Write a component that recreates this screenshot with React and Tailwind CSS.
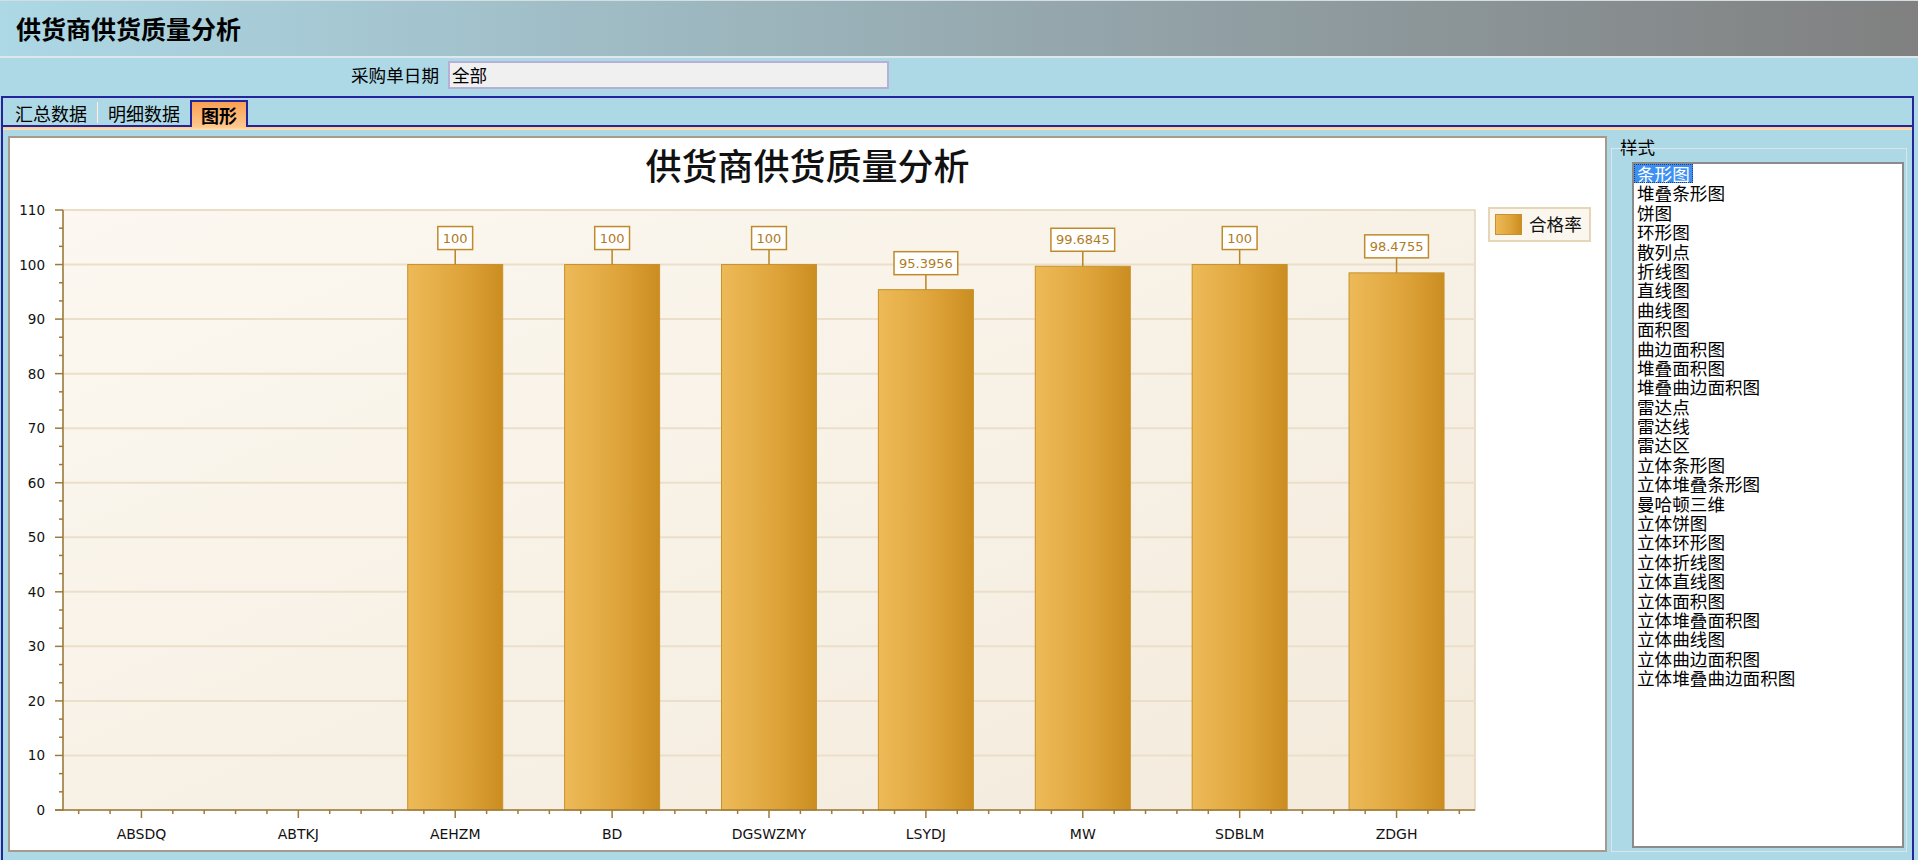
import React from "react";

const data = [
  { name: "ABSDQ", v: null },
  { name: "ABTKJ", v: null },
  { name: "AEHZM", v: 100 },
  { name: "BD", v: 100 },
  { name: "DGSWZMY", v: 100 },
  { name: "LSYDJ", v: 95.3956 },
  { name: "MW", v: 99.6845 },
  { name: "SDBLM", v: 100 },
  { name: "ZDGH", v: 98.4755 },
];

const chartTypes = [
  "条形图", "堆叠条形图", "饼图", "环形图", "散列点", "折线图", "直线图", "曲线图", "面积图",
  "曲边面积图", "堆叠面积图", "堆叠曲边面积图", "雷达点", "雷达线", "雷达区", "立体条形图",
  "立体堆叠条形图", "曼哈顿三维", "立体饼图", "立体环形图", "立体折线图", "立体直线图",
  "立体面积图", "立体堆叠面积图", "立体曲线图", "立体曲边面积图", "立体堆叠曲边面积图",
];

// plot geometry (svg coords)
const X0 = 53;
const X1 = 1465;
const Y0 = 620;
const K = 5.4545;
const STEP = (X1 - X0) / 9;
const yOf = (v) => Y0 - v * K;
const NUM = "DejaVu Sans, sans-serif";
const CJK = "Noto Sans CJK SC, sans-serif";

function labelWidth(s) {
  let w = 0;
  for (const c of s) w += c === "." ? 4.13 : 8.27;
  return w + 10;
}

function Chart() {
  const top = yOf(110);
  const yMinor = [];
  for (let i = 0; i < 33; i++) {
    if (i % 3 !== 0) yMinor.push(yOf((i * 10) / 3));
  }
  const xMinor = [];
  for (let k = 0; k < 45; k++) {
    if (k % 5 !== 2) xMinor.push(X0 + STEP / 10 + k * (STEP / 5));
  }

  return (
    <svg width="1595" height="660" className="block">
      <defs>
        <linearGradient id="plotbg" x1="0" y1="0" x2="1" y2="1">
          <stop offset="0" stopColor="#fcf8f1" />
          <stop offset="1" stopColor="#f3eadb" />
        </linearGradient>
        <linearGradient id="bar" x1="0" y1="0" x2="1" y2="0">
          <stop offset="0" stopColor="#edba58" />
          <stop offset="0.55" stopColor="#dfa53c" />
          <stop offset="1" stopColor="#cb8d20" />
        </linearGradient>
      </defs>

      <rect x={X0} y={top} width={X1 - X0} height={Y0 - top} fill="url(#plotbg)" stroke="#e4d5b8" strokeWidth="1.5" />

      {Array.from({ length: 10 }, (_, i) => (
        <line key={i} x1={X0} x2={X1} y1={yOf((i + 1) * 10)} y2={yOf((i + 1) * 10)} stroke="#ebdfc9" strokeWidth="2" />
      ))}

      {data.map((d, i) => {
        if (d.v == null) return null;
        const cx = X0 + STEP * (i + 0.5);
        const bt = yOf(d.v);
        const txt = String(d.v);
        const lw = labelWidth(txt);
        return (
          <g key={d.name}>
            <rect x={cx - 47.5} y={bt} width="95" height={Y0 - bt} fill="url(#bar)" stroke="#c8912c" strokeWidth="1" />
            <line x1={cx} x2={cx} y1={bt - 15} y2={bt} stroke="#b98426" strokeWidth="1.5" />
            <rect x={cx - lw / 2} y={bt - 38} width={lw} height="23" fill="#fff" stroke="#bf8a2a" strokeWidth="1.5" />
            <text x={cx} y={bt - 22} textAnchor="middle" fontFamily={NUM} fontSize="13" fill="#b07b1e">
              {txt}
            </text>
          </g>
        );
      })}

      {/* axes */}
      <line x1={X0} x2={X0} y1={top} y2={Y0 + 1} stroke="#9b7a3a" strokeWidth="1.5" />
      <line x1={X0 - 8} x2={X1} y1={Y0} y2={Y0} stroke="#9b7a3a" strokeWidth="1.5" />

      {Array.from({ length: 12 }, (_, i) => (
        <g key={i}>
          <line x1={X0 - 8} x2={X0} y1={yOf(i * 10)} y2={yOf(i * 10)} stroke="#9b7a3a" strokeWidth="1.5" />
          <text x="35" y={yOf(i * 10) + 5} textAnchor="end" fontFamily={NUM} fontSize="13.5" fill="#111">
            {i * 10}
          </text>
        </g>
      ))}
      {yMinor.map((y, i) => (
        <line key={i} x1={X0 - 4} x2={X0} y1={y} y2={y} stroke="#9b7a3a" strokeWidth="1.5" />
      ))}

      {xMinor.map((x, i) => (
        <line key={i} x1={x} x2={x} y1={Y0} y2={Y0 + 4} stroke="#9b7a3a" strokeWidth="1.5" />
      ))}
      {data.map((d, i) => {
        const cx = X0 + STEP * (i + 0.5);
        return (
          <g key={d.name}>
            <line x1={cx} x2={cx} y1={Y0} y2={Y0 + 8} stroke="#9b7a3a" strokeWidth="1.5" />
            <text x={cx} y={Y0 + 29} textAnchor="middle" fontFamily={NUM} fontSize="14" fill="#111">
              {d.name}
            </text>
          </g>
        );
      })}

      {/* legend */}
      <rect x="1479" y="18" width="101" height="33" fill="#fbf6ee" stroke="#e6d6b8" strokeWidth="2" />
      <rect x="1485.5" y="24.5" width="26" height="20" fill="url(#bar)" stroke="#c8912c" strokeWidth="1" />
      <text x="1519" y="41" fontFamily={CJK} fontSize="17.6" fill="#111">
        合格率
      </text>
    </svg>
  );
}

export default function App() {
  return (
    <div className="w-[1918px] h-[860px] overflow-hidden bg-[#add8e6] font-['Noto_Sans_CJK_SC',sans-serif] text-black">
      {/* header */}
      <div className="h-[56px] border-t border-[#d4dde2] bg-gradient-to-r from-[#add8e6] to-[#808080] flex items-center pl-[16px]">
        <span className="text-[25px] font-bold leading-none">供货商供货质量分析</span>
      </div>
      <div className="h-[2px] bg-[#dde8ed]" />

      {/* filter */}
      <div className="h-[38px] flex items-start pt-[3px] pl-[351px]">
        <span className="text-[17.6px] leading-[28px] w-[89px]">采购单日期</span>
        <div className="ml-[8px] w-[441px] h-[28px] border-2 border-[#b6b0d6] bg-[#f0f0f0] pl-[2px] text-[17.6px] leading-[24px]">
          全部
        </div>
      </div>

      {/* tab container */}
      <div className="ml-[1px] w-[1913px] h-[800px] border-2 border-[#24249c]">
        <div className="h-[29px] flex items-end pl-[12px] border-b-2 border-[#24249c]">
          <div className="h-[25px] flex items-center text-[18px] leading-none pr-[9px]">汇总数据</div>
          <div className="w-[2px] h-[21px] mb-[2px] bg-[#c9ced2] border-r border-[#eef4f6]" />
          <div className="h-[25px] flex items-center text-[18px] leading-none pl-[10px] pr-[10px]">明细数据</div>
          <div className="w-[58px] h-[27px] -mb-[2px] border-2 border-b-0 border-[#24249c] bg-gradient-to-b from-[#f8a050] to-[#ffc88e] flex items-center justify-center text-[18px] font-bold leading-none">
            图形
          </div>
        </div>
        <div className="h-[3px] bg-gradient-to-b from-[#ffc88a] to-[#fde1b8]" />

        <div className="flex pt-[6px]">
          {/* chart panel */}
          <div className="ml-[5px] w-[1599px] h-[716px] border-2 border-[#a8998a] bg-white flex flex-col">
            <div className="h-[52px] flex items-center justify-center">
              <span className="text-[36px] font-medium leading-none text-[#111]">供货商供货质量分析</span>
            </div>
            <Chart />
          </div>

          {/* style group */}
          <div className="ml-[4px] w-[296px] flex flex-col">
            <div className="h-[12px] flex items-end">
              <span className="ml-[9px] text-[17.6px] leading-none -mb-[8px] bg-[#add8e6] pr-[2px]">样式</span>
            </div>
            <div className="h-[704px] border border-[#dbe5ea] pt-[13px] pl-[20px] pr-[3px] pb-[4px]">
              <div className="h-[686px] w-[272px] border-2 border-[#8b8b8b] bg-white overflow-hidden">
                {chartTypes.map((t, i) => (
                  <div key={t} className="h-[19.4px] text-[17.6px] leading-[19.4px] whitespace-nowrap">
                    {i === 0 ? (
                      <span className="inline-block bg-[#3d8ff2] text-white px-[3px] outline-1 outline-dotted outline-[#1a3f8a] -outline-offset-1">
                        {t}
                      </span>
                    ) : (
                      <span className="pl-[3px]">{t}</span>
                    )}
                  </div>
                ))}
              </div>
            </div>
          </div>
        </div>
      </div>
    </div>
  );
}
